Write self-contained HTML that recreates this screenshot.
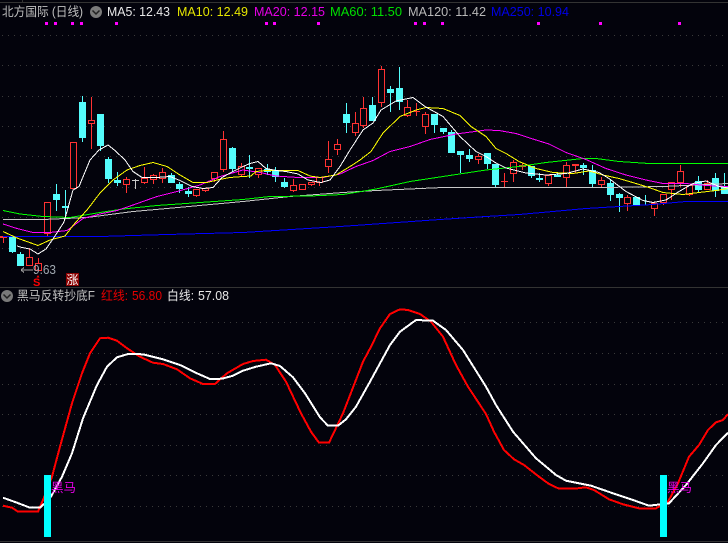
<!DOCTYPE html>
<html><head><meta charset="utf-8"><style>
html,body{margin:0;padding:0;background:#03030c;width:728px;height:543px;overflow:hidden}
svg{display:block}
text{font-family:"Liberation Sans","Noto Sans CJK SC",sans-serif}
.l{fill:none;shape-rendering:crispEdges}
</style></head><body>
<svg width="728" height="543" viewBox="0 0 728 543" xmlns="http://www.w3.org/2000/svg">
<rect width="728" height="543" fill="#03030c"/>
<g shape-rendering="crispEdges">
<rect x="0" y="2" width="728" height="1" fill="#333"/>
<rect x="22" y="0" width="1" height="2" fill="#333"/>
<rect x="0" y="287" width="728" height="1" fill="#333"/>
<rect x="0" y="541" width="728" height="1" fill="#333"/>
<path stroke="#3a3a3a" stroke-dasharray="1 5" fill="none" d="M2 35.5H728M2 65.5H728M2 96.5H728M2 126.5H728M2 156.5H728M2 187.5H728M2 217.5H728M2 248.5H728M2 322.5H728M2 353.5H728M2 384.5H728M2 414.5H728M2 445.5H728M2 475.5H728M2 506.5H728"/>
<path fill="#ff00ff" d="M45 22h3v3h-3zM54 22h3v3h-3zM71 22h3v3h-3zM80 22h3v3h-3zM115 22h3v3h-3zM265 22h3v3h-3zM273 22h3v3h-3zM317 22h3v3h-3zM414 22h3v3h-3zM423 22h3v3h-3zM441 22h3v3h-3zM537 22h3v3h-3zM599 22h3v3h-3zM678 22h3v3h-3z"/>

<!-- cyan wicks -->
<path fill="none" stroke="#54fcfc" d="M12.5 236V253M20.5 252V266M56.5 184V211M65.5 190V217M82.5 96V142M100.5 114V151M108.5 157V183M117.5 172V186M179.5 182V193M188.5 187V197M171.5 173V183M232.5 147V172M249.5 155V178M267.5 164V175M275.5 167V182M284.5 178V188M346.5 103V133M372.5 97V121M390.5 86V112M399.5 67V110M434.5 114V133M443.5 128V134M451.5 130V153M460.5 151V173M469.5 149V162M487.5 153V169M495.5 164V187M531.5 166V178M539.5 173V182M557.5 173V177M583.5 163V175M592.5 165V188M610.5 180V201M619.5 193V212M636.5 197V205M645.5 195V205M698.5 176V192M715.5 173V197M724.5 173V194"/>
<!-- cyan bodies -->
<path fill="#54fcfc" d="M9 236h7v16h-7zM17 254h7v12h-7zM53 194h7v6h-7zM62 206h7v2h-7zM79 102h7v36h-7zM97 114h7v32h-7zM105 159h7v20h-7zM114 180h7v3h-7zM176 184h7v5h-7zM185 191h7v3h-7zM168 175h7v8h-7zM229 148h7v21h-7zM246 167h7v2h-7zM264 169h7v3h-7zM272 171h7v6h-7zM281 182h7v5h-7zM343 114h7v9h-7zM369 105h7v16h-7zM387 89h7v4h-7zM396 88h7v14h-7zM431 114h7v11h-7zM440 128h7v4h-7zM448 132h7v21h-7zM457 151h7v4h-7zM466 155h7v4h-7zM484 153h7v11h-7zM492 164h7v21h-7zM528 166h7v10h-7zM536 178h7v2h-7zM554 175h7v2h-7zM580 165h7v3h-7zM589 170h7v14h-7zM607 183h7v12h-7zM616 194h7v4h-7zM633 197h7v8h-7zM695 181h7v9h-7zM712 178h7v13h-7zM721 187h7v7h-7z"/>
<path stroke="#c8c8c8" fill="none" d="M135.5 179V189M132 180.5H139"/>
<!-- red wicks -->
<path fill="none" stroke="#ff3232" d="M3.5 236V243M29.5 248V265M38.5 258V270M47.5 202V236M73.5 142V189M91.5 97V149M126.5 177V193M144.5 167V184M153.5 174V184M162.5 168V183M196.5 189V197M205.5 188V192M214.5 172V182M223.5 131V172M241.5 163V176M258.5 168V178M293.5 179V192M302.5 184V190M311.5 182V186M319.5 177V186M328.5 141V173M337.5 139V155M355.5 112V136M363.5 97V128M381.5 66V107M407.5 100V117M416.5 103V116M425.5 112V134M478.5 154V164M504.5 173V188M513.5 160V182M522.5 163V170M548.5 175V186M566.5 162V187M575.5 164V173M601.5 177V187M627.5 195V211M654.5 202V216M663.5 194V205M671.5 182V200M680.5 165V187M689.5 185V196M707.5 180V190M413 111.5H420M501 181.5H508"/>
<!-- red bodies -->
<path fill="#03030c" stroke="#ff3232" d="M.5 236.5h6v1h-6zM26.5 257.5h6v8h-6zM35.5 263.5h6v7h-6zM44.5 202.5h6v31h-6zM70.5 142.5h6v46h-6zM88.5 120.5h6v3h-6zM123.5 179.5h6v5h-6zM141.5 178.5h6v4h-6zM150.5 175.5h6v4h-6zM159.5 172.5h6v6h-6zM193.5 189.5h6v6h-6zM202.5 188.5h6v2h-6zM211.5 172.5h6v6h-6zM220.5 139.5h6v30h-6zM238.5 166.5h6v8h-6zM255.5 168.5h6v6h-6zM290.5 185.5h6v5h-6zM299.5 184.5h6v5h-6zM308.5 182.5h6v2h-6zM316.5 177.5h6v5h-6zM325.5 159.5h6v7h-6zM334.5 144.5h6v5h-6zM352.5 123.5h6v9h-6zM360.5 108.5h6v17h-6zM378.5 69.5h6v33h-6zM404.5 107.5h6v8h-6zM422.5 114.5h6v12h-6zM475.5 156.5h6v3h-6zM510.5 162.5h6v11h-6zM519.5 165.5h6v1h-6zM545.5 175.5h6v8h-6zM563.5 165.5h6v12h-6zM572.5 164.5h6v1h-6zM598.5 180.5h6v4h-6zM624.5 197.5h6v6h-6zM651.5 203.5h6v5h-6zM660.5 194.5h6v8h-6zM668.5 182.5h6v7h-6zM677.5 171.5h6v11h-6zM686.5 185.5h6v9h-6zM704.5 183.5h6v6h-6z"/>
</g>

<!-- MA lines -->
<polyline class="l" stroke="#c8c8c8" points="3,219.5 43,219.5 87,217.5 133,211.5 167,208.5 243,201.5 290,196.5 343,192.5 376,190.5 443,187.5 603,187.5 663,186.5 728,183.5"/>
<polyline class="l" stroke="#0000ff" points="3,236.5 100,236.5 167,234.5 243,232.5 340,226.5 440,219.5 486,216.5 519,214.5 553,211.5 586,208.5 619,206.5 653,204.5 686,201.5 728,201.5"/>
<polyline class="l" stroke="#00ff00" points="3,210.5 20,214 43,216.5 70,217.5 100,212.5 123,209 157,205.5 200,202.5 243,199.5 270,196.5 310,196 343,194.5 376,189 410,181.5 443,176.5 486,170 519,166.5 546,162.5 583,158.5 596,158.5 619,161.5 649,163.5 728,163.5"/>
<polyline class="l" stroke="#ff00ff" points="3,224 17,228.5 33,232.5 50,232.5 67,230.5 83,218.5 100,214 117,210.5 133,205 157,196.5 177,191.5 200,185 220,176.5 243,170 260,172.5 276,176 298,177.5 323,177.5 340,174 356,166.5 373,160.5 390,151.5 410,146.5 430,139.5 456,134 486,130 499,130.5 516,133.5 536,140 549,144 566,152.5 586,159.5 606,168.5 626,175 646,180 663,183.5 686,183.5 706,185.5 728,186.5"/>
<polyline class="l" stroke="#ffff00" points="3,231.5 17,238 38,245.5 50,240 65,236 75,223 87,210 100,193 113,180 127,170 140,165.5 153,162.5 167,166.5 180,175 193,182.5 207,182.5 217,180 230,177.5 243,176.5 251,176 256,171.5 266,170.5 280,170.5 298,170.5 310,176 320,177.5 336,175 350,166.5 360,160 371,151.5 383,133 400,116.5 416,110 426,107.5 443,108.5 460,115.5 471,126.5 486,136.5 496,148.5 506,153.5 519,161.5 536,168.5 553,172.5 573,173.5 589,171 603,175 619,178.5 636,183.5 649,187.5 663,192.5 683,194.5 699,192.5 716,190.5 728,188.5"/>
<polyline class="l" stroke="#ffffff" points="17,246 22,247.5 30,249 38,254 46,249 55,236 64,222 73,190 79,186.5 90,160 99,150 108,145 115,150.5 125,160 133,171.5 142,177.5 157,177.5 170,176.5 180,180.5 192,186.5 203,188.5 213,187.5 222,177.5 233,171.5 243,166.5 250,163.5 258,161.5 266,168.5 276,170.5 286,171.5 298,174 308,180 321,182.5 330,180 340,166.5 350,150 363,130 373,123 381,110 396,101 413,97.5 425,106.5 443,116.5 460,136.5 476,151.5 486,156.5 496,163 506,168 526,173 546,175 566,173.5 583,169 599,172.5 609,178.5 626,191.5 643,200.5 653,202.5 666,200 679,191.5 693,183.5 706,181 719,186.5 728,188"/>

<!-- top labels -->
<text x="2" y="16" font-size="12.5" fill="#c0c0c0" textLength="81" lengthAdjust="spacingAndGlyphs">北方国际 (日线)</text>
<circle cx="96" cy="12" r="6" fill="#7a7a7a"/><path d="M92.5 10.5L96 14L99.5 10.5" fill="none" stroke="#222" stroke-width="1.5"/>
<text x="107" y="16" font-size="13" fill="#e8e8e8" textLength="63" lengthAdjust="spacingAndGlyphs">MA5: 12.43</text>
<text x="177" y="16" font-size="13" fill="#e6e600" textLength="71" lengthAdjust="spacingAndGlyphs">MA10: 12.49</text>
<text x="254" y="16" font-size="13" fill="#e600e6" textLength="71" lengthAdjust="spacingAndGlyphs">MA20: 12.15</text>
<text x="330" y="16" font-size="13" fill="#00e000" textLength="72" lengthAdjust="spacingAndGlyphs">MA60: 11.50</text>
<text x="408" y="16" font-size="13" fill="#b8b8b8" textLength="78" lengthAdjust="spacingAndGlyphs">MA120: 11.42</text>
<text x="491" y="16" font-size="13" fill="#0000e6" textLength="78" lengthAdjust="spacingAndGlyphs">MA250: 10.94</text>

<!-- low annotation -->
<path d="M21 270H33M21 270l3-2.5M21 270l3 2.5" fill="none" stroke="#a0a0a0" shape-rendering="crispEdges"/>
<text x="33" y="274" font-size="13" fill="#a0a8b0" textLength="23" lengthAdjust="spacingAndGlyphs">9.63</text>
<path d="M36.5 277.5l1.5-2.5 1.5 2.5z" fill="#ff0000"/>
<text x="33" y="286" font-size="11" font-weight="bold" fill="#ff0000">S</text>
<rect x="66" y="273" width="13" height="13" fill="#8a0000"/>
<text x="66.5" y="284" font-size="12" fill="#ffffff">涨</text>

<!-- lower header -->
<circle cx="7" cy="296" r="6" fill="#7a7a7a"/><path d="M3.5 294.5L7 298L10.5 294.5" fill="none" stroke="#222" stroke-width="1.5"/>
<text x="17" y="300" font-size="12.5" fill="#c0c0c0" textLength="78" lengthAdjust="spacingAndGlyphs">黑马反转抄底F</text>
<text x="101" y="300" font-size="12.5" fill="#e60000" textLength="27" lengthAdjust="spacingAndGlyphs">红线:</text>
<text x="132" y="300" font-size="13" fill="#e60000" textLength="30" lengthAdjust="spacingAndGlyphs">56.80</text>
<text x="167" y="300" font-size="12.5" fill="#e8e8e8" textLength="27" lengthAdjust="spacingAndGlyphs">白线:</text>
<text x="198" y="300" font-size="13" fill="#e8e8e8" textLength="31" lengthAdjust="spacingAndGlyphs">57.08</text>

<!-- lower lines -->
<polyline class="l" stroke="#ff0000" stroke-width="2" points="3,505.7 12,507.7 18,511.7 38,511.7 43,500 52,476.7 60,446.7 72,403.3 82,373.3 90,353.3 100,338.3 108,337.7 117,340.7 127,348.3 140,356.7 153,362.7 163,364 177,369.3 190,378.3 203,384 215,384 227,373.3 243,364 253,361 266,359.7 275,365 286,381.7 301,413.3 311,431.7 319,442.7 329,442.7 343,413.3 363,361.7 371,346.7 380,328.3 390,314 400,309.3 408,310 420,314 431,321.7 443,336.7 456,365 468,386.7 486,414 494,431.7 504,450 514,459.3 524,465 539,476.7 549,484 559,488.7 574,488.7 586,487.3 594,490 609,499.3 623,504.3 639,508.3 656,508.3 668,501.7 678,483.3 689,456.7 699,445 708,430 716,422.3 723,420 728,414"/>
<polyline class="l" stroke="#ffffff" stroke-width="2" points="3,497.7 17,502.7 30,507.7 40,507.7 50,498.3 62,476.7 72,453.3 83,418.3 97,385 107,366.7 117,357.3 128,354 143,354.3 163,359.3 180,365 197,373.3 210,379 222,378.7 233,375.7 243,370.7 256,366.7 271,363.3 280,366 293,377.3 305,393.3 320,417.3 328,425.7 338,425.7 346,419.3 356,406.7 370,381.7 390,345 400,331.7 416,320 433,320.7 446,330 463,350 486,386.7 496,405 513,431.7 536,458.3 556,475 566,480.7 591,485.7 613,493.3 633,500 649,505.7 669,503.3 686,485 703,463.3 716,445 728,432.7"/>
<rect x="44" y="475" width="7" height="62" fill="#00ffff" shape-rendering="crispEdges"/>
<rect x="660" y="475" width="7" height="62" fill="#00ffff" shape-rendering="crispEdges"/>
<text x="51" y="492" font-size="12.5" fill="#e600e6">黑马</text>
<text x="667" y="492" font-size="12.5" fill="#e600e6">黑马</text>
</svg>
</body></html>
